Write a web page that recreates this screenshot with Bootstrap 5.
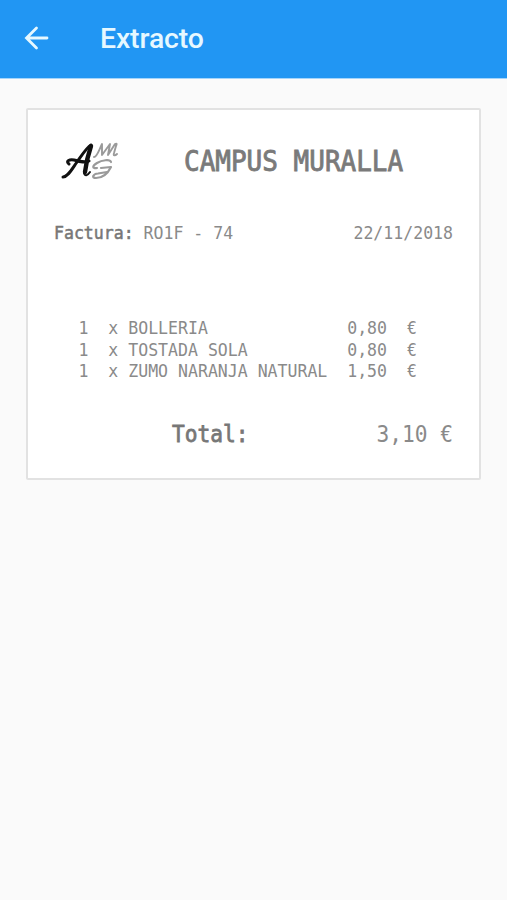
<!DOCTYPE html>
<html lang="es">
<head>
<meta charset="utf-8">
<meta name="viewport" content="width=device-width, initial-scale=1">
<title>Extracto</title>
<link rel="stylesheet" href="https://cdn.jsdelivr.net/npm/bootstrap@5.3.0/dist/css/bootstrap.min.css">
<style>
body { background: #fafafa; min-height: 100vh; }
.app-bar { background: #2196f3; height: 79px; padding: 0 24px 3px; gap: 51px; border-bottom: 1px solid #a5d5fb; }
.app-title { font: 500 28.4px/36px Roboto, sans-serif; color: #e6f8ff; letter-spacing: -.1px; padding-top: 3px; }
.ticket { margin: 29px 26px 0; width: 455px; height: 372px; border: 2px solid #e2e2e2; border-radius: 2px; padding: 0 26px; color: #8a8a8a; font: 16.55px/21.6px "DejaVu Sans Mono", monospace; }
.ticket .mono { display: block; white-space: pre; transform: scaleY(1.09); }
.ticket-head { height: 102px; padding-left: 6px; gap: 64px; }
.shop { font-size: 26px; line-height: 30px; font-weight: 400; color: #7a7a7a; -webkit-text-stroke: .8px #7a7a7a; }
.invoice { height: 44px; }
.ticket b { color: #777; font-weight: 400; -webkit-text-stroke: .5px #777; }
.items { padding: 62px 0 0 24.5px; }
.item-name { width: 22ch; }
.total { margin-top: 33px; padding-left: 118px; font-size: 21.2px; line-height: 36px; }
.total b { -webkit-text-stroke-width: .7px; }
</style>
</head>
<body>
<header class="app-bar d-flex align-items-center">
  <svg width="25" height="26" viewBox="0 0 25 26" fill="none" stroke="#e6f8ff" stroke-width="2.8" stroke-linecap="round"><path d="M23 13H3M12.500 3 2.500 13l10 10"/></svg>
  <h1 class="app-title mb-0">Extracto</h1>
</header>
<main class="ticket bg-white">
  <div class="ticket-head d-flex align-items-center">
    <svg width="60" height="42" viewBox="0 0 60 42" fill="none" stroke-linecap="round" stroke-linejoin="round">
      <g stroke="#111">
        <path stroke-width="3" d="M3 37C8 37 12 29 17 22S27 7 31 5"/>
        <path stroke-width="4.400" d="M31 6C28 15 26 24 25 32"/>
        <path stroke-width="2" d="M24 33c1 4 4 2 6-1"/>
        <path stroke-width="3" d="M9 24c-4-3 1-5 5-4 7 2 11 3 15 1"/>
      </g>
      <g stroke="#9a9a9a">
        <path stroke-width="1.900" d="M34 17C37 17 39 10 42 4L42 15 50 4 48 15 55 4C57 3 57 4 56 6L54 13C53 16 55 16 57 14"/>
        <path stroke-width="2.200" d="M51 22C50 19 42 20 37 23S32 29 37 28M41 28 51 27C48 33 43 38 36 38 31 38 33 34 38 33.500L47 32"/>
      </g>
    </svg>
    <h2 class="shop mono mb-0">CAMPUS MURALLA</h2>
  </div>
  <div class="invoice d-flex align-items-center justify-content-between">
    <div class="d-flex"><b class="mono">Factura:</b><span class="mono"> RO1F - 74</span></div>
    <span class="mono">22/11/2018</span>
  </div>
  <div class="items">
    <div class="d-flex"><span class="mono">1  x </span><span class="mono item-name">BOLLERIA</span><span class="mono">0,80  €</span></div>
    <div class="d-flex"><span class="mono">1  x </span><span class="mono item-name">TOSTADA SOLA</span><span class="mono">0,80  €</span></div>
    <div class="d-flex"><span class="mono">1  x </span><span class="mono item-name">ZUMO NARANJA NATURAL</span><span class="mono">1,50  €</span></div>
  </div>
  <div class="total d-flex justify-content-between"><b class="mono">Total:</b><span class="mono">3,10 €</span></div>
</main>
<script src="https://cdn.jsdelivr.net/npm/bootstrap@5.3.0/dist/js/bootstrap.bundle.min.js"></script>
</body>
</html>
